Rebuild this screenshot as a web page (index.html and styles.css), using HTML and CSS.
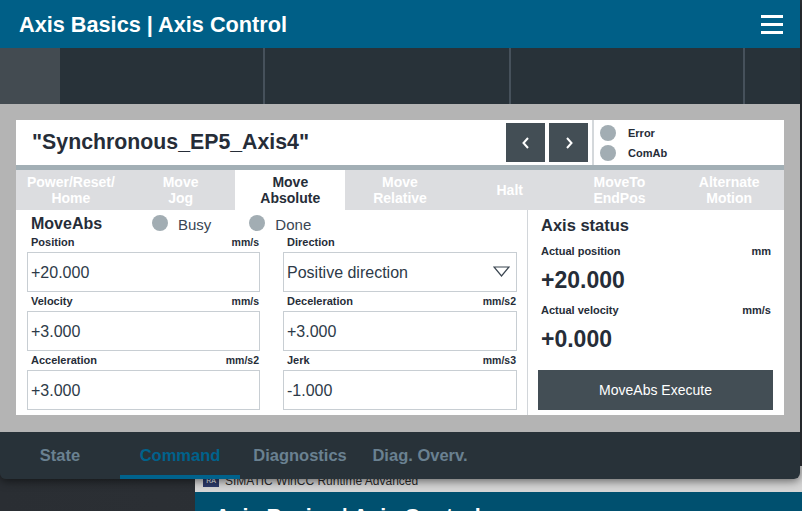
FILE: index.html
```html
<!DOCTYPE html>
<html>
<head>
<meta charset="utf-8">
<link rel="stylesheet" href="styles.css">
</head>
<body>
<div class="desktop">
  <div class="backdrop">
    <div class="bd-titlebar"><span class="bd-icon">RA</span><span class="bd-title">SIMATIC WinCC Runtime Advanced</span></div>
    <div class="bd-header">Axis Basics | Axis Control</div>
  </div>

  <div class="window">
    <header class="app-header">
      <h1 class="app-title">Axis Basics | Axis Control</h1>
      <div class="hamburger"><span></span><span></span><span></span></div>
    </header>

    <div class="toolbar">
      <div class="tool-home"></div>
      <div class="tool-cell c1"></div>
      <div class="tool-cell c2"></div>
      <div class="tool-cell c3"></div>
      <div class="tool-cell c4"></div>
    </div>

    <main class="stage">
      <section class="panel">
        <div class="title-row">
          <div class="axis-name">"Synchronous_EP5_Axis4"</div>
          <div class="nav-btns">
            <button class="nav-btn"><svg width="10" height="14" viewBox="0 0 10 14"><polyline points="7,2 2.5,7 7,12" fill="none" stroke="#fff" stroke-width="2"/></svg></button>
            <button class="nav-btn"><svg width="10" height="14" viewBox="0 0 10 14"><polyline points="3,2 7.5,7 3,12" fill="none" stroke="#fff" stroke-width="2"/></svg></button>
          </div>
          <div class="status-box">
            <div class="st-row"><span class="dot"></span><span class="st-text">Error</span></div>
            <div class="st-row"><span class="dot"></span><span class="st-text">ComAb</span></div>
          </div>
        </div>
        <div class="divider"></div>
        <nav class="tabs">
          <div class="tab">Power/Reset/<br>Home</div>
          <div class="tab">Move<br>Jog</div>
          <div class="tab active">Move<br>Absolute</div>
          <div class="tab">Move<br>Relative</div>
          <div class="tab">Halt</div>
          <div class="tab">MoveTo<br>EndPos</div>
          <div class="tab">Alternate<br>Motion</div>
        </nav>
        <div class="content">
          <div class="form">
            <div class="form-head">
              <span class="form-title">MoveAbs</span>
              <span class="dot big busy-dot"></span><span class="flag">Busy</span>
              <span class="dot big done-dot"></span><span class="flag">Done</span>
            </div>
            <div class="fields">
              <div class="field">
                <div class="lbl"><span>Position</span><span class="unit">mm/s</span></div>
                <div class="inp">+20.000</div>
              </div>
              <div class="field">
                <div class="lbl"><span>Direction</span></div>
                <div class="inp select"><span>Positive direction</span>
                  <svg width="17" height="11" viewBox="0 0 17 11"><polygon points="1,1 16,1 8.5,10" fill="none" stroke="#3b4651" stroke-width="1.2"/></svg>
                </div>
              </div>
              <div class="field">
                <div class="lbl"><span>Velocity</span><span class="unit">mm/s</span></div>
                <div class="inp">+3.000</div>
              </div>
              <div class="field">
                <div class="lbl"><span>Deceleration</span><span class="unit">mm/s2</span></div>
                <div class="inp">+3.000</div>
              </div>
              <div class="field">
                <div class="lbl"><span>Acceleration</span><span class="unit">mm/s2</span></div>
                <div class="inp">+3.000</div>
              </div>
              <div class="field">
                <div class="lbl"><span>Jerk</span><span class="unit">mm/s3</span></div>
                <div class="inp">-1.000</div>
              </div>
            </div>
          </div>
          <div class="axis-status">
            <div class="as-title">Axis status</div>
            <div class="as-lbl"><span>Actual position</span><span>mm</span></div>
            <div class="as-val">+20.000</div>
            <div class="as-lbl"><span>Actual velocity</span><span>mm/s</span></div>
            <div class="as-val">+0.000</div>
            <button class="exec-btn">MoveAbs Execute</button>
          </div>
        </div>
      </section>
    </main>

    <footer class="bottom-bar">
      <div class="btab">State</div>
      <div class="btab active">Command</div>
      <div class="btab">Diagnostics</div>
      <div class="btab">Diag. Overv.</div>
    </footer>
  </div>
</div>
</body>
</html>
```

FILE: styles.css
```css
* { box-sizing: border-box; }
html, body { margin: 0; padding: 0; }
body {
  width: 802px;
  height: 511px;
  overflow: hidden;
  background: #2d3136;
  font-family: "Liberation Sans", Arial, sans-serif;
  color: #262d38;
}
.desktop {
  position: relative;
  width: 802px;
  height: 511px;
  background: linear-gradient(90deg, #2a2e33 0%, #2f3338 100%);
}

/* backdrop window */
.backdrop {
  position: absolute;
  left: 195px;
  top: 466px;
  width: 620px;
  height: 60px;
}
.bd-titlebar {
  height: 26px;
  background: #d6d6d6;
  display: flex;
  align-items: center;
  padding-left: 8px;
  padding-top: 4px;
  font-size: 12px;
  color: #2a2a2a;
}
.bd-icon {
  width: 16px;
  height: 12px;
  background: #2c3a6a;
  color: #fff;
  font-size: 7px;
  line-height: 12px;
  text-align: center;
  margin-right: 6px;
}
.bd-header {
  height: 40px;
  background: #00506f;
  color: #fff;
  font-weight: bold;
  font-size: 21.5px;
  padding-left: 20px;
  padding-top: 13px;
}

/* main window */
.window {
  position: absolute;
  left: 0;
  top: 0;
  width: 800px;
  height: 479px;
  display: flex;
  flex-direction: column;
  border-radius: 0 0 6px 6px;
  overflow: hidden;
  box-shadow: 0 2px 10px rgba(0,0,0,0.55);
}
.app-header {
  height: 48px;
  background: #005f87;
  display: flex;
  align-items: center;
  justify-content: space-between;
  padding: 0 17px 0 19px;
}
.app-title {
  margin: 0;
  color: #fff;
  font-size: 21.7px;
  font-weight: bold;
  padding-top: 1px;
}
.hamburger {
  display: flex;
  flex-direction: column;
  gap: 5px;
  padding-top: 1px;
}
.hamburger span {
  display: block;
  width: 22px;
  height: 3px;
  background: #fff;
}

.toolbar {
  height: 56px;
  display: flex;
  background: #283239;
}
.tool-home { width: 60px; background: #434b51; }
.tool-cell { border-right: 2px solid #46515b; }
.c1 { width: 205px; }
.c2 { width: 246px; }
.c3 { width: 234px; }
.c4 { flex: 1; border-right: 0; }

.stage {
  height: 328px;
  background: #b4b4b4;
  padding: 16px 16px 17px;
}
.panel {
  height: 295px;
  background: #fff;
  display: flex;
  flex-direction: column;
}
.title-row {
  height: 45px;
  display: flex;
  align-items: center;
}
.axis-name {
  flex: 1;
  padding-left: 16px;
  font-size: 21.3px;
  font-weight: bold;
  color: #262d38;
}
.nav-btns {
  display: flex;
  gap: 4px;
  margin-right: 4px;
}
.nav-btn {
  width: 39px;
  height: 39px;
  border: 0;
  padding: 0;
  background: #434e55;
  display: flex;
  align-items: center;
  justify-content: center;
}
.status-box {
  width: 192px;
  height: 45px;
  border-left: 2px solid #d4d8db;
  display: flex;
  flex-direction: column;
  justify-content: center;
  gap: 4px;
  padding-left: 6px;
  padding-top: 1px;
}
.st-row { display: flex; align-items: center; height: 16px; }
.dot {
  display: inline-block;
  width: 16px;
  height: 16px;
  border-radius: 50%;
  background: #a2adb3;
  flex: none;
}
.st-text {
  margin-left: 12px;
  font-size: 11px;
  font-weight: bold;
  color: #262d38;
}
.divider { height: 5px; background: #a2afb5; }

.tabs {
  height: 40px;
  display: flex;
  background: #dcdde0;
}
.tab {
  flex: 1;
  display: flex;
  align-items: center;
  justify-content: center;
  text-align: center;
  font-size: 14px;
  font-weight: bold;
  line-height: 16px;
  color: #fff;
}
.tab.active { background: #fff; color: #262d38; }

.content {
  height: 205px;
  display: flex;
}
.form {
  width: 512px;
  border-right: 1px solid #d2d6da;
  padding-left: 11px;
}
.form-head {
  height: 23px;
  display: flex;
  align-items: center;
  padding-left: 4px;
  padding-top: 5px;
}
.form-title {
  font-size: 16px;
  font-weight: bold;
  width: 121px;
  color: #262d38;
}
.busy-dot { margin-top: -3px; }
.done-dot { margin-top: -3px; margin-left: 38px; }
.flag {
  margin-left: 10px;
  font-size: 15px;
  color: #3a4654;
}
.fields {
  display: grid;
  grid-template-columns: 233px 234px;
  column-gap: 23px;
}
.lbl {
  height: 19px;
  display: flex;
  justify-content: space-between;
  align-items: flex-end;
  padding: 0 1px 4px 4px;
  font-size: 11px;
  font-weight: bold;
  color: #262d38;
}
.unit { font-size: 10.5px; }
.inp {
  height: 40px;
  border: 1px solid #c8ced3;
  display: flex;
  align-items: center;
  padding: 1px 0 0 3px;
  font-size: 16px;
  color: #2d3a48;
}
.select {
  justify-content: space-between;
  padding-right: 6px;
}
.select svg { margin-top: -2px; }

.axis-status {
  flex: 1;
  padding: 0 11px 0 10px;
  display: flex;
  flex-direction: column;
}
.as-title {
  height: 28px;
  display: flex;
  align-items: center;
  padding: 2px 0 0 3px;
  font-size: 16.5px;
  font-weight: bold;
  color: #262d38;
}
.as-lbl {
  height: 26px;
  display: flex;
  justify-content: space-between;
  align-items: center;
  padding: 0 2px 0 3px;
  font-size: 11px;
  font-weight: bold;
  color: #262d38;
}
.as-val {
  height: 32px;
  display: flex;
  align-items: center;
  padding: 1px 0 0 3px;
  font-size: 23px;
  font-weight: bold;
  color: #262d38;
}
.as-val + .as-lbl { margin-top: 1px; }
.exec-btn {
  margin-top: 15px;
  height: 40px;
  border: 0;
  background: #434e55;
  color: #fff;
  font-family: "Liberation Sans", Arial, sans-serif;
  font-size: 14px;
}

.bottom-bar {
  height: 47px;
  background: #283239;
  display: flex;
}
.btab {
  width: 120px;
  display: flex;
  align-items: center;
  justify-content: center;
  font-size: 16.5px;
  font-weight: bold;
  color: #6a8191;
  border-bottom: 4px solid transparent;
  padding-top: 3px;
}
.btab.active {
  color: #00628c;
  border-bottom-color: #00628c;
}
```
